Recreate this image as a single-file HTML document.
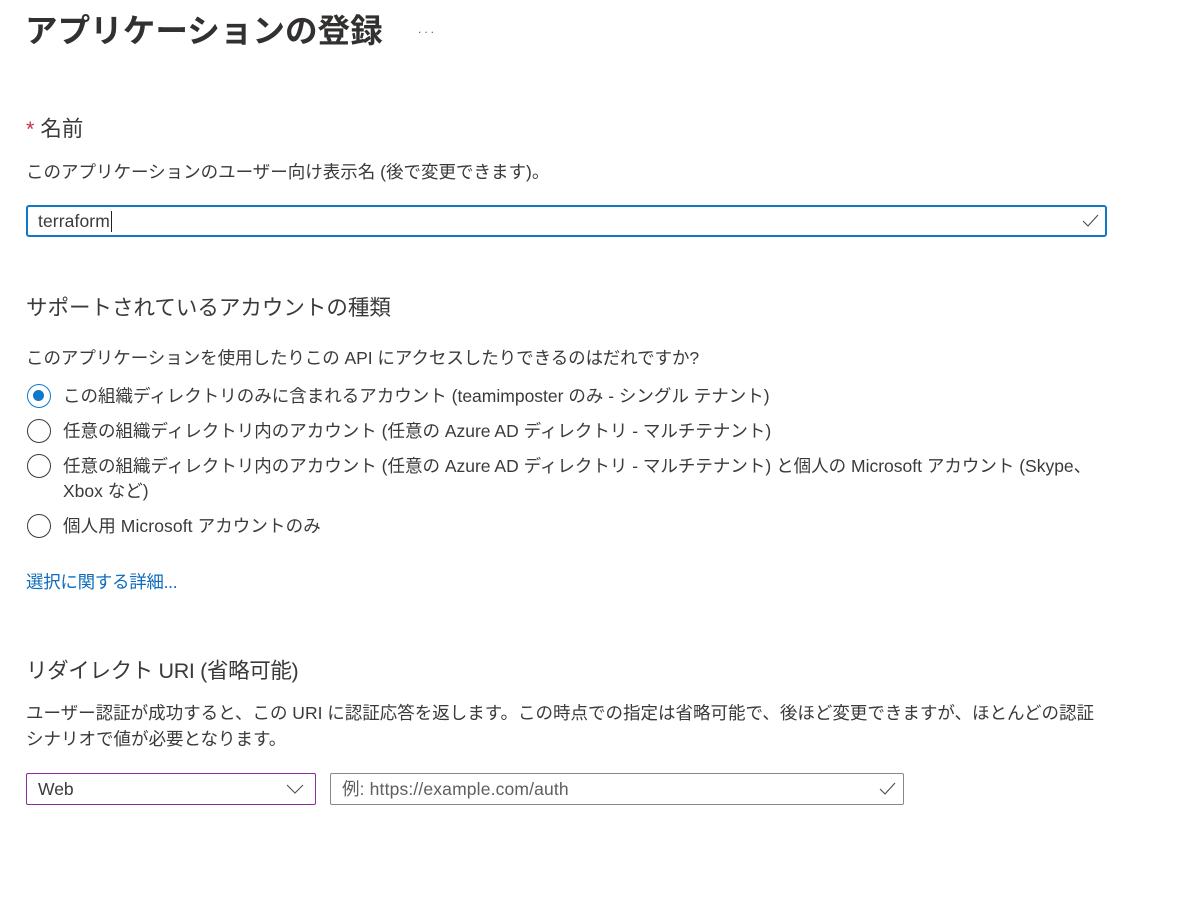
<!DOCTYPE html>
<html lang="ja"><head><meta charset="utf-8"><title>アプリケーションの登録</title>
<style>
html,body{margin:0;padding:0;background:#fff;width:1200px;height:922px;overflow:hidden}
body{position:relative;font-family:"Liberation Sans","Noto Sans CJK JP",sans-serif;color:#3b3a39;font-size:17.5px}
#w{position:absolute;left:0;top:0;width:1200px;height:922px;filter:blur(.3px)}
.t{position:absolute;white-space:nowrap;line-height:24px}
.h{font-size:21.5px}
.box{position:absolute;box-sizing:border-box;background:#fff;border-radius:2px}
.r{position:absolute;left:27px;width:24px;height:24px;box-sizing:border-box;border:1.5px solid #3b3a39;border-radius:50%}
svg{position:absolute}
</style></head><body><div id="w">
<div class="t" style="left:25px;top:12px;font-size:32.6px;line-height:38px;font-weight:700;color:#323130">アプリケーションの登録</div>
<div class="t" style="left:418px;top:17px;font-size:12px;letter-spacing:3px;color:#605e5c">...</div>

<div class="t h" style="left:26px;top:117px"><span style="color:#c4314b">*</span> 名前</div>
<div class="t" style="left:26px;top:160px">このアプリケーションのユーザー向け表示名 (後で変更できます)。</div>
<div class="box" style="left:26px;top:205px;width:1081px;height:32px;border:2px solid #0f78c8;border-radius:3px"></div>
<div class="t" style="left:38px;top:209px;letter-spacing:.1px">terraform</div>
<div style="position:absolute;left:111px;top:211px;width:1px;height:21px;background:#222"></div>
<svg style="left:1082px;top:213px" width="18" height="15" viewBox="0 0 18 15"><path d="M1 8l5 5L16 2" fill="none" stroke="#4a4948" stroke-width="1.1"/></svg>

<div class="t h" style="left:26px;top:296px">サポートされているアカウントの種類</div>
<div class="t" style="left:26px;top:346px;letter-spacing:-.05px">このアプリケーションを使用したりこの API にアクセスしたりできるのはだれですか?</div>

<div class="r" style="top:384px;border-color:#0f78c8"><div style="position:absolute;left:5px;top:5px;width:11px;height:11px;border-radius:50%;background:#0f78c8"></div></div>
<div class="t" style="left:63px;top:384px">この組織ディレクトリのみに含まれるアカウント (teamimposter のみ - シングル テナント)</div>
<div class="r" style="top:419px"></div>
<div class="t" style="left:63px;top:419px">任意の組織ディレクトリ内のアカウント (任意の Azure AD ディレクトリ - マルチテナント)</div>
<div class="r" style="top:454px"></div>
<div class="t" style="left:63px;top:454px">任意の組織ディレクトリ内のアカウント (任意の Azure AD ディレクトリ - マルチテナント) と個人の Microsoft アカウント (Skype、</div>
<div class="t" style="left:63px;top:479px">Xbox など)</div>
<div class="r" style="top:514px"></div>
<div class="t" style="left:63px;top:514px;letter-spacing:.1px">個人用 Microsoft アカウントのみ</div>

<div class="t" style="left:26px;top:570px;color:#0f6cbd;letter-spacing:-.3px">選択に関する詳細...</div>

<div class="t h" style="left:26px;top:659px;letter-spacing:-.35px">リダイレクト URI (省略可能)</div>
<div class="t" style="left:26px;top:701px">ユーザー認証が成功すると、この URI に認証応答を返します。この時点での指定は省略可能で、後ほど変更できますが、ほとんどの認証</div>
<div class="t" style="left:26px;top:727px">シナリオで値が必要となります。</div>

<div class="box" style="left:26px;top:773px;width:290px;height:32px;border:1px solid #8c2d9e"></div>
<div class="t" style="left:38px;top:777px">Web</div>
<svg style="left:286px;top:784px" width="18" height="11" viewBox="0 0 18 11"><path d="M1 1l8 8 8-8" fill="none" stroke="#4a4948" stroke-width="1"/></svg>
<div class="box" style="left:330px;top:773px;width:574px;height:32px;border:1px solid #8a8886"></div>
<div class="t" style="left:342px;top:777px;color:#605e5c;letter-spacing:.15px">例: https://example.com/auth</div>
<svg style="left:879px;top:781px" width="18" height="15" viewBox="0 0 18 15"><path d="M1 8l5 5L16 2" fill="none" stroke="#4a4948" stroke-width="1.1"/></svg>
</div></body></html>
